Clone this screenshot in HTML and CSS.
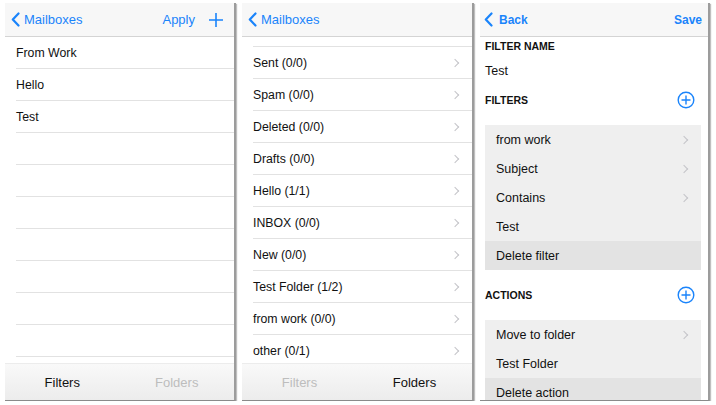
FILE: index.html
```html
<!DOCTYPE html>
<html lang="en">
<head>
  <meta charset="UTF-8" />
  <meta name="viewport" content="width=device-width, initial-scale=1" />
  <title>Mail Filters</title>
  <link rel="stylesheet" href="styles.css">
</head>
<body>
  <main class="screens">
    <!-- Screen 1: filter list -->
    <section class="phone phone-a">
      <header class="navbar">
        <a class="nav-back" href="#">
          <svg class="chev-back" width="9" height="15" viewBox="0 0 9 15"><polyline points="7.5,1.5 1.8,7.5 7.5,13.5" /></svg>
          Mailboxes
        </a>
        <div class="nav-actions">
          <a class="nav-link" href="#">Apply</a>
          <svg class="nav-plus" width="16" height="16" viewBox="0 0 16 16"><path d="M8 1v14M1 8h14" /></svg>
        </div>
      </header>
      <ul class="list">
        <li class="row">From Work</li>
        <li class="row">Hello</li>
        <li class="row">Test</li>
        <li class="row"></li>
        <li class="row"></li>
        <li class="row"></li>
        <li class="row"></li>
        <li class="row"></li>
        <li class="row"></li>
        <li class="row"></li>
        <li class="row"></li>
      </ul>
      <nav class="tabbar">
        <span class="tab tab-on">Filters</span>
        <span class="tab">Folders</span>
      </nav>
    </section>

    <!-- Screen 2: folder list, scrolled a little -->
    <section class="phone phone-b">
      <header class="navbar">
        <a class="nav-back" href="#">
          <svg class="chev-back" width="9" height="15" viewBox="0 0 9 15"><polyline points="7.5,1.5 1.8,7.5 7.5,13.5" /></svg>
          Mailboxes
        </a>
      </header>
      <ul class="list">
        <li class="row row-cut"></li>
        <li class="row">Sent (0/0)<span class="chev"></span></li>
        <li class="row">Spam (0/0)<span class="chev"></span></li>
        <li class="row">Deleted (0/0)<span class="chev"></span></li>
        <li class="row">Drafts (0/0)<span class="chev"></span></li>
        <li class="row">Hello (1/1)<span class="chev"></span></li>
        <li class="row">INBOX (0/0)<span class="chev"></span></li>
        <li class="row">New (0/0)<span class="chev"></span></li>
        <li class="row">Test Folder (1/2)<span class="chev"></span></li>
        <li class="row">from work (0/0)<span class="chev"></span></li>
        <li class="row">other (0/1)<span class="chev"></span></li>
      </ul>
      <nav class="tabbar">
        <span class="tab">Filters</span>
        <span class="tab tab-on">Folders</span>
      </nav>
    </section>

    <!-- Screen 3: filter editor -->
    <section class="phone phone-c">
      <header class="navbar">
        <a class="nav-back nav-strong" href="#">
          <svg class="chev-back" width="9" height="15" viewBox="0 0 9 15"><polyline points="7.5,1.5 1.8,7.5 7.5,13.5" /></svg>
          Back
        </a>
        <a class="nav-link nav-strong" href="#">Save</a>
      </header>
      <div class="editor">
        <div class="caption">FILTER NAME</div>
        <div class="name-value">Test</div>

        <div class="section-head">
          <span>FILTERS</span>
          <svg class="add-btn" width="18" height="18" viewBox="0 0 18 18"><circle cx="9" cy="9" r="7.8" /><path d="M9 4.5v9M4.5 9h9" /></svg>
        </div>
        <ul class="group">
          <li class="cell">from work<span class="chev"></span></li>
          <li class="cell">Subject<span class="chev"></span></li>
          <li class="cell">Contains<span class="chev"></span></li>
          <li class="cell">Test</li>
          <li class="cell cell-danger">Delete filter</li>
        </ul>

        <div class="section-head section-gap">
          <span>ACTIONS</span>
          <svg class="add-btn" width="18" height="18" viewBox="0 0 18 18"><circle cx="9" cy="9" r="7.8" /><path d="M9 4.5v9M4.5 9h9" /></svg>
        </div>
        <ul class="group">
          <li class="cell">Move to folder<span class="chev"></span></li>
          <li class="cell">Test Folder</li>
          <li class="cell cell-danger">Delete action</li>
        </ul>
      </div>
    </section>
  </main>
</body>
</html>
```

FILE: styles.css
```css
/* Base */
body {
  margin: 0;
  background: #fff;
  font-family: "Liberation Sans", Arial, sans-serif;
  color: #111;
}
ul {
  list-style: none;
  margin: 0;
  padding: 0;
}
a {
  text-decoration: none;
  color: #1a84fb;
}

/* Three phone screens side by side */
.screens {
  display: flex;
  gap: 6px;
  padding: 3px 0 0 5px;
}
.phone {
  height: 397px;
  background: #fff;
  display: flex;
  flex-direction: column;
  overflow: hidden;
  border-right: 2px solid #9c9c9c;
  border-bottom: 1px solid #8a8a8a;
  box-shadow: 1px 1px 1px rgba(0, 0, 0, 0.25);
}
.phone-a { width: 229px; }
.phone-b { width: 230px; }
.phone-c { width: 228px; }

/* Navigation bar */
.navbar {
  flex: 0 0 33px;
  display: flex;
  align-items: center;
  justify-content: space-between;
  background: #f7f7f7;
  border-bottom: 1px solid #d4d4d4;
  padding: 0 8px 0 6px;
  font-size: 13px;
}
.nav-back {
  display: flex;
  align-items: center;
  gap: 4px;
}
.chev-back polyline {
  fill: none;
  stroke: #1a84fb;
  stroke-width: 2.2;
  stroke-linecap: round;
  stroke-linejoin: round;
}
.nav-actions {
  display: flex;
  align-items: center;
  gap: 13px;
  padding-right: 2px;
}
.nav-plus path {
  stroke: #1a84fb;
  stroke-width: 1.6;
}
.nav-strong {
  font-weight: bold;
  font-size: 12px;
}
.phone-c .navbar {
  padding: 0 6px 0 4px;
}
.phone-c .nav-back {
  gap: 6px;
}

/* Plain lists */
.list {
  flex: 1;
  overflow: hidden;
}
.row {
  height: 32px;
  box-sizing: border-box;
  margin-left: 11px;
  padding-right: 12px;
  border-bottom: 1px solid #e2e2e2;
  display: flex;
  align-items: center;
  justify-content: space-between;
  font-size: 12.3px;
}
.row-cut {
  height: 10px;
}

/* Disclosure chevron */
.chev {
  width: 5px;
  height: 5px;
  border-top: 1px solid #c4c4c8;
  border-right: 1px solid #c4c4c8;
  transform: rotate(45deg);
  margin-right: 2px;
}

/* Bottom tab bar */
.tabbar {
  flex: 0 0 36px;
  display: flex;
  background: linear-gradient(#f9f9f9, #ececec);
  border-top: 1px solid #ececec;
}
.tab {
  flex: 1;
  display: flex;
  align-items: center;
  justify-content: center;
  font-size: 13px;
  color: #bdbdbd;
}
.tab-on {
  color: #111;
}

/* Filter editor */
.editor {
  padding: 0 7px 0 5px;
  font-size: 12.5px;
}
.caption {
  height: 18px;
  line-height: 18px;
  font-size: 10.5px;
  font-weight: bold;
}
.name-value {
  height: 32px;
  line-height: 32px;
}
.section-head {
  height: 26px;
  display: flex;
  align-items: center;
  justify-content: space-between;
  font-size: 10.5px;
  font-weight: bold;
  margin-bottom: 12px;
  padding-right: 6px;
}
.section-gap {
  margin-top: 12px;
}
.add-btn circle,
.add-btn path {
  fill: none;
  stroke: #1a84fb;
  stroke-width: 1.4;
}
.group {
  background: #efefef;
}
.cell {
  height: 29px;
  display: flex;
  align-items: center;
  justify-content: space-between;
  padding: 0 12px 0 11px;
}
.cell-danger {
  background: #e3e3e3;
}
```
